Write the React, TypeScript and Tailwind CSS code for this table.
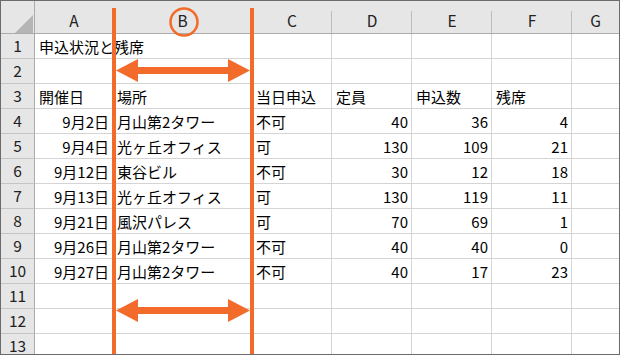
const ORANGE = '#f26b2b';

const columns = [
  { label: 'A', w: 'w-[78px]', border: true },
  { label: 'B', w: 'w-[139px]', border: true },
  { label: 'C', w: 'w-[80px]', border: true },
  { label: 'D', w: 'w-[80px]', border: true },
  { label: 'E', w: 'w-[80px]', border: true },
  { label: 'F', w: 'w-[80px]', border: true },
  { label: 'G', w: 'w-[47px]', border: false },
];

type Cell = { v: string; right?: boolean; spill?: boolean };

const L = (v: string): Cell => ({ v });
const R = (v: string | number): Cell => ({ v: String(v), right: true });

const rows: Cell[][] = [
  [{ v: '申込状況と残席', spill: true }],
  [],
  [L('開催日'), L('場所'), L('当日申込'), L('定員'), L('申込数'), L('残席')],
  [R('9月2日'), L('月山第2タワー'), L('不可'), R(40), R(36), R(4)],
  [R('9月4日'), L('光ヶ丘オフィス'), L('可'), R(130), R(109), R(21)],
  [R('9月12日'), L('東谷ビル'), L('不可'), R(30), R(12), R(18)],
  [R('9月13日'), L('光ヶ丘オフィス'), L('可'), R(130), R(119), R(11)],
  [R('9月21日'), L('風沢パレス'), L('可'), R(70), R(69), R(1)],
  [R('9月26日'), L('月山第2タワー'), L('不可'), R(40), R(40), R(0)],
  [R('9月27日'), L('月山第2タワー'), L('不可'), R(40), R(17), R(23)],
  [],
  [],
  [],
];

function Arrow({ cy }: { cy: number }) {
  const x1 = 115;
  const x2 = 249;
  const head = 22;
  const hh = 11.5;
  const sh = 3.5;
  const pts = [
    [x1, cy],
    [x1 + head, cy - hh],
    [x1 + head, cy - sh],
    [x2 - head, cy - sh],
    [x2 - head, cy - hh],
    [x2, cy],
    [x2 - head, cy + hh],
    [x2 - head, cy + sh],
    [x1 + head, cy + sh],
    [x1 + head, cy + hh],
  ]
    .map((p) => p.join(','))
    .join(' ');
  return <polygon points={pts} fill={ORANGE} />;
}

export default function App() {
  return (
    <div className="relative w-[620px] h-[355px] overflow-hidden bg-white border border-[#6b6b6b] font-['Noto_Sans_CJK_JP','Noto_Sans',sans-serif] text-[15px] text-black leading-none">
      {/* column header */}
      <div className="flex h-[33px] bg-[#e6e6e6] border-b border-[#ababab]">
        <div className="relative w-[34px] shrink-0 border-r border-[#ababab]">
          <svg className="absolute left-[14px] top-[14px]" width="18" height="18" viewBox="0 0 18 18">
            <polygon points="18,0 18,18 0,18" fill="#b5b5b5" />
          </svg>
        </div>
        {columns.map((c) => (
          <div key={c.label} className={`relative ${c.w} shrink-0 flex items-center justify-center pt-[7px] text-[15.5px] text-[#222]`}>
            {c.label}
            {c.border && <span className="absolute right-0 top-[10px] bottom-0 w-px bg-[#bdbdbd]" />}
          </div>
        ))}
      </div>

      {/* sheet rows */}
      {rows.map((row, i) => (
        <div key={i} className="flex h-[25px]">
          <div className="w-[34px] shrink-0 flex items-center justify-center bg-[#e6e6e6] border-r border-[#ababab] border-b border-b-[#c4c4c4] text-[15.5px] text-[#222]">
            {i + 1}
          </div>
          {columns.map((c, j) => {
            const cell = row[j];
            return (
              <div
                key={c.label}
                className={`${c.w} shrink-0 flex items-center border-b border-[#d4d4d4] ${c.border ? 'border-r' : ''} ${
                  cell?.spill ? 'overflow-visible whitespace-nowrap relative z-10' : 'overflow-hidden'
                } ${cell?.right ? 'justify-end pr-[3px]' : 'pl-[4px]'}`}
              >
                {cell?.v}
              </div>
            );
          })}
        </div>
      ))}

      {/* column width markers */}
      <svg className="absolute inset-0 pointer-events-none z-20" width="620" height="355" viewBox="0 0 620 355">
        <rect x="111" y="7" width="4" height="348" fill={ORANGE} />
        <rect x="249" y="7" width="4" height="348" fill={ORANGE} />
        <circle cx="183" cy="21" r="13.5" fill="none" stroke={ORANGE} strokeWidth="2.5" />
        <Arrow cy={69.5} />
        <Arrow cy={309.5} />
      </svg>
    </div>
  );
}
